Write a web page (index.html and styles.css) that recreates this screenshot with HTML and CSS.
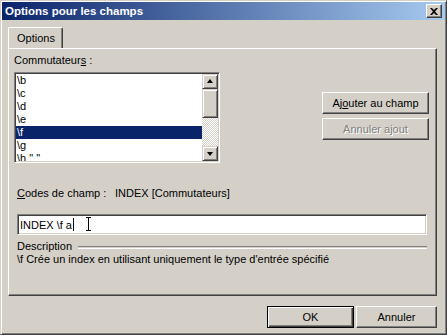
FILE: index.html
```html
<!DOCTYPE html>
<html lang="fr">
<head>
    <meta charset="UTF-8">
    <title>Options pour les champs</title>
    <link rel="stylesheet" href="styles.css">
</head>
<body>

<div class="window">
    <div class="titlebar">
        <span class="title">Options pour les champs</span>
        <div class="close">
            <svg width="8" height="7" viewBox="0 0 8 7"><path d="M0 0h2l2 2 2-2h2L5 3.5 8 7H6L4 5 2 7H0l3-3.5z" fill="#000"/></svg>
        </div>
    </div>

    <div class="body">
        <div class="tabs">
            <div class="tab">Options</div>
        </div>

        <div class="panel">
            <div class="label">Commutateur<u>s</u> :</div>

            <div class="switch-row">
                <div class="listbox">
                    <ul class="items">
                        <li>\b</li>
                        <li>\c</li>
                        <li>\d</li>
                        <li>\e</li>
                        <li class="selected">\f</li>
                        <li>\g</li>
                        <li>\h " "</li>
                    </ul>
                    <div class="scrollbar">
                        <div class="sb-btn"><span class="arrow-up"></span></div>
                        <div class="sb-thumb"></div>
                        <div class="sb-track"></div>
                        <div class="sb-btn"><span class="arrow-down"></span></div>
                    </div>
                </div>
                <div class="side-buttons">
                    <div class="btn">Aj<u>o</u>uter au champ</div>
                    <div class="btn disabled">Annuler ajout</div>
                </div>
            </div>

            <div class="codes">
                <span class="codes-label"><u>C</u>odes de champ :</span>
                <span>INDEX [Commutateurs]</span>
            </div>

            <div class="field">
                <span>INDEX \f a</span><span class="caret"></span>
                <span class="ibeam"></span>
            </div>

            <div class="legend">
                <span>Description</span>
                <span class="rule"></span>
            </div>
            <div class="desc">\f Crée un index en utilisant uniquement le type d'entrée spécifié</div>
        </div>

        <div class="footer">
            <div class="btn default">OK</div>
            <div class="btn cancel">Annuler</div>
        </div>
    </div>
</div>

</body>
</html>
```

FILE: styles.css
```css
body {
    margin: 0;
    font-family: "Liberation Sans", Arial, sans-serif;
    font-size: 11px;
    color: #000;
    background-color: #d4d0c8;
}
u {
    text-decoration: underline;
}
.window {
    box-sizing: border-box;
    width: 447px;
    height: 335px;
    padding: 1px;
    background-color: #d4d0c8;
    border: 1px solid;
    border-color: #d4d0c8 #404040 #404040 #d4d0c8;
    box-shadow: inset 1px 1px #fff, inset -1px -1px #808080;
    display: flex;
    flex-direction: column;
}
.titlebar {
    height: 18px;
    display: flex;
    align-items: center;
    justify-content: space-between;
    padding: 0 3px 0 3px;
    background: linear-gradient(to right, #0a246a, #a6caf0);
}
.title {
    color: #fff;
    font-weight: bold;
    font-size: 11.5px;
}
.close {
    box-sizing: border-box;
    width: 16px;
    height: 14px;
    display: flex;
    align-items: center;
    justify-content: center;
    background-color: #d4d0c8;
    border: 1px solid;
    border-color: #fff #404040 #404040 #fff;
    box-shadow: inset -1px -1px #808080;
}
.body {
    flex: 1;
    display: flex;
    flex-direction: column;
    padding: 7px 8px 0 6px;
}
.tabs {
    display: flex;
    height: 21px;
    position: relative;
    z-index: 1;
}
.tab {
    width: 55px;
    height: 21px;
    padding: 4px 0 0 8px;
    box-sizing: border-box;
    background-color: #d4d0c8;
    border: 1px solid;
    border-bottom: none;
    border-color: #fff #404040 #d4d0c8 #fff;
    border-radius: 2px 2px 0 0;
    box-shadow: inset -1px 0 #808080;
}
.panel {
    box-sizing: border-box;
    height: 248px;
    padding: 5px 8px 0 5px;
    border: 1px solid;
    border-color: #fff #404040 #404040 #fff;
    box-shadow: inset -1px -1px #808080;
}
.label {
    line-height: 13px;
}
.switch-row {
    display: flex;
    justify-content: space-between;
    margin-top: 5px;
}
.listbox {
    box-sizing: border-box;
    width: 206px;
    height: 91px;
    display: flex;
    background-color: #fff;
    border: 1px solid;
    border-color: #808080 #fff #fff #808080;
    box-shadow: inset 1px 1px #404040, inset -1px -1px #d4d0c8;
    padding: 1px;
    overflow: hidden;
}
.items {
    flex: 1;
    margin: 0;
    padding: 0;
    list-style-type: none;
    overflow: hidden;
}
.items li {
    height: 13px;
    line-height: 13px;
    padding-left: 1px;
    white-space: pre;
}
.items li.selected {
    background-color: #0a246a;
    color: #fff;
}
.scrollbar {
    width: 16px;
    display: flex;
    flex-direction: column;
}
.sb-btn, .sb-thumb {
    box-sizing: border-box;
    background-color: #d4d0c8;
    border: 1px solid;
    border-color: #d4d0c8 #404040 #404040 #d4d0c8;
    box-shadow: inset 1px 1px #fff, inset -1px -1px #808080;
}
.sb-btn {
    height: 15px;
    display: flex;
    align-items: center;
    justify-content: center;
}
.sb-thumb {
    height: 29px;
}
.sb-track {
    flex: 1;
    background-color: #fff;
    background-image: repeating-conic-gradient(#d4d0c8 0 25%, #fff 0 50%);
    background-size: 2px 2px;
}
.arrow-up {
    border-left: 3px solid transparent;
    border-right: 3px solid transparent;
    border-bottom: 4px solid #000;
    margin-top: -1px;
}
.arrow-down {
    border-left: 3px solid transparent;
    border-right: 3px solid transparent;
    border-top: 4px solid #000;
}
.side-buttons {
    display: flex;
    flex-direction: column;
    gap: 4px;
    margin-top: 20px;
    margin-right: -1px;
}
.btn {
    box-sizing: border-box;
    height: 22px;
    display: flex;
    align-items: center;
    justify-content: center;
    background-color: #d4d0c8;
    border: 1px solid;
    border-color: #fff #404040 #404040 #fff;
    box-shadow: inset -1px -1px #808080;
}
.side-buttons .btn {
    width: 107px;
}
.btn.disabled {
    color: #808080;
    text-shadow: 1px 1px #fff;
}
.codes {
    display: flex;
    margin: 24px 0 0 3px;
    line-height: 13px;
}
.codes-label {
    width: 98px;
}
.field {
    box-sizing: border-box;
    height: 21px;
    margin: 14px 1px 0 3px;
    padding: 0 2px;
    display: flex;
    align-items: center;
    position: relative;
    background-color: #fff;
    border: 1px solid;
    border-color: #808080 #fff #fff #808080;
    box-shadow: inset 1px 1px #404040, inset -1px -1px #d4d0c8;
}
.caret {
    width: 1px;
    height: 13px;
    margin-left: 1px;
    background-color: #000;
}
.ibeam {
    position: absolute;
    left: 68px;
    top: 2px;
    width: 5px;
    height: 14px;
    border-top: 1px solid #000;
    border-bottom: 1px solid #000;
    box-sizing: border-box;
    background: linear-gradient(#000, #000) center / 1px 100% no-repeat;
}
.legend {
    display: flex;
    align-items: center;
    gap: 6px;
    margin: 5px 1px 0 3px;
    line-height: 13px;
}
.rule {
    flex: 1;
    height: 1px;
    border-top: 1px solid #808080;
    border-bottom: 1px solid #fff;
    margin-top: 2px;
}
.desc {
    margin-left: 3px;
    line-height: 13px;
}
.footer {
    display: flex;
    justify-content: flex-end;
    gap: 2px;
    margin-top: 10px;
}
.footer .btn {
    height: 22px;
}
.btn.default {
    width: 87px;
    border: 1px solid #000;
    box-shadow: inset 1px 1px #fff, inset -1px -1px #404040, inset -2px -2px #808080;
}
.btn.cancel {
    width: 81px;
}
```
